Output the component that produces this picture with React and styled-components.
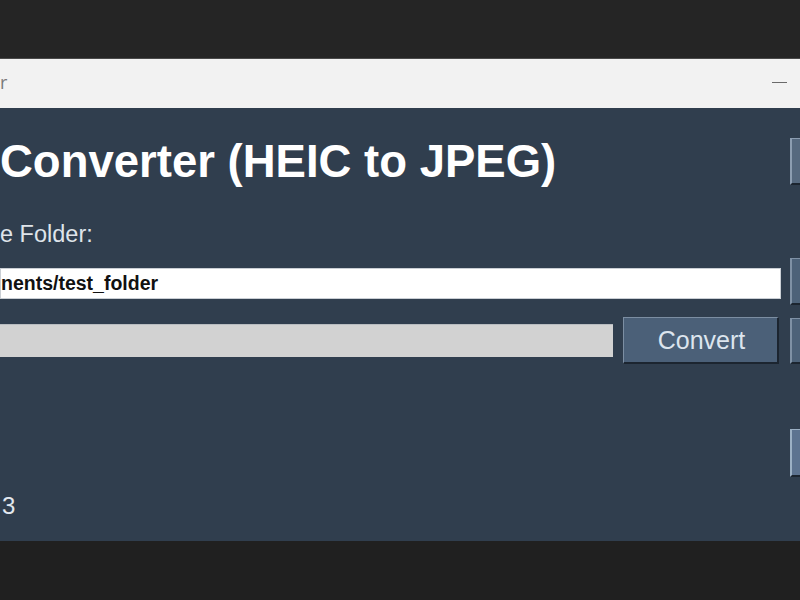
import React from "react";
import styled, { createGlobalStyle } from "styled-components";

const Global = createGlobalStyle`
  html, body { margin: 0; padding: 0; background: #232323; }
  body { font-family: "Liberation Sans", Arial, sans-serif; }
  #root { width: 800px; height: 600px; overflow: hidden; }
`;

const Screen = styled.div`
  width: 800px;
  height: 600px;
  display: flex;
  flex-direction: column;
  overflow: hidden;
`;

const TopBand = styled.div`
  height: 58px;
  background: #252525;
  border-bottom: 1px solid #4a4a4a;
`;

const TitleBar = styled.div`
  height: 49px;
  background: #f2f2f2;
  display: flex;
  align-items: center;
  justify-content: space-between;
  padding-right: 13px;
`;

const WindowTitle = styled.span`
  font-family: "Open Sans", "Liberation Sans", sans-serif;
  font-size: 18px;
  color: #7a7a7a;
  margin-top: -4px;
`;

const Minimize = styled.span`
  width: 15px;
  height: 1px;
  background: #6a6a6a;
  margin-top: -2px;
`;

const Body = styled.div`
  height: 433px;
  background: #303e4e;
  padding-top: 30px;
  box-sizing: border-box;
  display: flex;
  flex-direction: column;
`;

const Row = styled.div`
  display: grid;
  grid-template-columns: 781px 1fr;
  column-gap: 9px;
  height: ${(p) => p.$h || 47}px;
  margin-top: ${(p) => p.$mt || 0}px;
  align-items: ${(p) => p.$align || "center"};
`;

const Heading = styled.h1`
  margin: 0;
  font-size: 45.5px;
  line-height: 47px;
  font-weight: 700;
  color: #ffffff;
  white-space: nowrap;
`;

const Label = styled.div`
  font-size: 23.5px;
  line-height: 30px;
  color: #dfe4ea;
  white-space: nowrap;
`;

const PathInput = styled.div`
  height: 31px;
  margin-top: 10px;
  background: #ffffff;
  border: 1px solid #c9ced4;
  box-sizing: border-box;
  display: flex;
  align-items: center;
  font-size: 19.5px;
  font-weight: 700;
  color: #111;
  white-space: nowrap;
  overflow: hidden;
`;

const ProgressLine = styled.div`
  display: flex;
  align-items: center;
  gap: 10px;
  height: 47px;
`;

const Progress = styled.div`
  width: 613px;
  height: 33px;
  background: #d2d2d2;
  border-top: 1px solid #b8bcc0;
  box-sizing: border-box;
`;

const Button = styled.div`
  height: 47px;
  box-sizing: border-box;
  background: ${(p) => p.$bg || "#4b6078"};
  border-top: 1px solid ${(p) => p.$light || "#7c8ea2"};
  border-left: 1px solid ${(p) => p.$light || "#7c8ea2"};
  border-right: 2px solid #1c2530;
  border-bottom: 2px solid #1c2530;
  color: #dce5ee;
  font-size: 25px;
  display: flex;
  align-items: center;
  justify-content: center;
`;

const ConvertButton = styled(Button)`
  width: 156px;
  padding-left: 2px;
`;

const SideButton = styled(Button)`
  width: 120px;
  height: ${(p) => p.$h || 47}px;
  border-left-width: 2px;
`;

const Status = styled.div`
  font-size: 24px;
  line-height: 30px;
  color: #e2e8ef;
  padding-left: 2px;
`;

const BottomBand = styled.div`
  flex: 1;
  background: #202020;
`;

export default function App() {
  return (
    <Screen>
      <Global />
      <TopBand />
      <TitleBar>
        <WindowTitle>r</WindowTitle>
        <Minimize />
      </TitleBar>
      <Body>
        <Row>
          <Heading>Converter (HEIC to JPEG)</Heading>
          <SideButton $bg="#56697f" $light="#8c9db1" />
        </Row>
        <Row $h={30} $mt={34}>
          <Label>e Folder:</Label>
          <span />
        </Row>
        <Row $mt={9} $align="start">
          <PathInput>nents/test_folder</PathInput>
          <SideButton $bg="#4d6279" $light="#7f91a5" />
        </Row>
        <Row $mt={12}>
          <ProgressLine>
            <Progress />
            <ConvertButton>Convert</ConvertButton>
          </ProgressLine>
          <SideButton $h={46} $bg="#4d6279" $light="#7f91a5" />
        </Row>
        <Row $mt={65} $h={48}>
          <span />
          <SideButton $h={48} $bg="#5d7390" $light="#9cb0c4" />
        </Row>
        <Row $h={30} $mt={14}>
          <Status>3</Status>
          <span />
        </Row>
      </Body>
      <BottomBand />
    </Screen>
  );
}
